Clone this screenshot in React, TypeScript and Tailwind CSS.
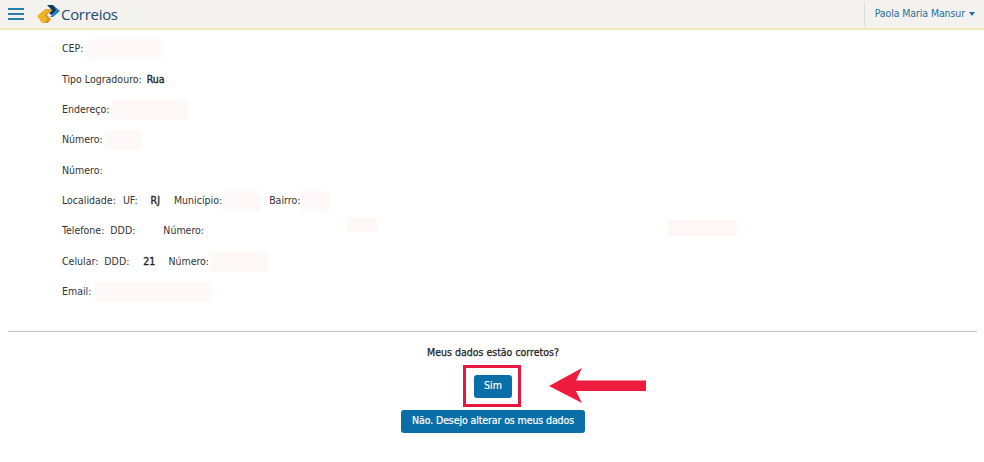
const rows = [
  { key: 'cep', items: [{ t: 'CEP:' }, { pink: 'ml-[3px] w-[75px]' }] },
  { key: 'tipo', items: [{ t: 'Tipo Logradouro:' }, { b: 'Rua', cls: 'ml-[5px]' }] },
  { key: 'end', items: [{ t: 'Endereço:' }, { pink: 'ml-[3px] w-[76px]' }] },
  { key: 'num', items: [{ t: 'Número:' }, { pink: 'ml-[2px] w-[36px]' }] },
  { key: 'num2', items: [{ t: 'Número:' }] },
  {
    key: 'loc',
    items: [
      { t: 'Localidade:' },
      { t: 'UF:', cls: 'ml-[7px]' },
      { b: 'RJ', cls: 'ml-[13px]' },
      { t: 'Município:', cls: 'ml-[14px]' },
      { pink: 'ml-[1px] w-[37px]' },
      { t: 'Bairro:', cls: 'ml-[9px]' },
      { pink: 'ml-[1px] w-[29px]' },
    ],
  },
  { key: 'tel', items: [{ t: 'Telefone:' }, { t: 'DDD:', cls: 'ml-[6px]' }, { t: 'Número:', cls: 'ml-[28px]' }] },
  {
    key: 'cel',
    items: [
      { t: 'Celular:' },
      { t: 'DDD:', cls: 'ml-[6px]' },
      { b: '21', cls: 'ml-[14px]' },
      { t: 'Número:', cls: 'ml-[13px]' },
      { pink: 'ml-[1px] w-[58px]' },
    ],
  },
  { key: 'email', items: [{ t: 'Email:' }, { pink: 'ml-[4px] w-[116px]' }] },
];

const Logo = () => (
  <svg width="24" height="20" viewBox="0 0 24 20">
    <path d="M0 12 L8 5 H13 L7 11.5 L10 15 L7 19 H5 Z" fill="#f0b323" />
    <path d="M7 11.5 L13 5 H15 L10 11 L14 15 L11 19 H7 L10 15 Z" fill="#d9971c" />
    <path d="M10 1 H16 L20 6 L15 11 L12 9.5 L15 6 Z" fill="#12395f" />
    <path d="M16 1 L23 7 L16 13 H13 L15 11 L20 6 Z" fill="#1c7fb8" />
  </svg>
);

export default function App() {
  return (
    <div className="relative h-[462px] w-[984px] overflow-hidden bg-white font-['DejaVu_Sans_Condensed','DejaVu_Sans',sans-serif] text-[10.5px] text-[#333]">
      <header className="flex h-[30px] items-center justify-between border-b-2 border-[#f5e9b8] bg-[#f3f2ee]">
        <div className="flex items-center">
          <div className="ml-2 flex w-[16px] flex-col gap-[3px]">
            <span className="h-[2px] bg-[#2a7dab]" />
            <span className="h-[2px] bg-[#2a7dab]" />
            <span className="h-[2px] bg-[#2a7dab]" />
          </div>
          <div className="ml-[13px] flex items-center">
            <Logo />
            <span className="font-['Open_Sans',sans-serif] text-[15px] font-medium tracking-[-0.3px] text-[#1c4a72]">Correios</span>
          </div>
        </div>
        <div className="flex h-[24px] items-center border-l border-[#dddcd6] pl-[10px] pr-[2px] text-[#2a6f9b]">
          <span className="tracking-[-0.1px]">Paola Maria Mansur</span>
          <span className="mx-[7px] ml-[4px] h-0 w-0 border-x-[3px] border-t-[4px] border-x-transparent border-t-[#1f6fa3]" />
        </div>
      </header>

      <main className="pl-[62px] pt-[4px]">
        {rows.map((r) => (
          <div key={r.key} className="flex h-[30.35px] items-center">
            {r.items.map((it, i) =>
              it.pink ? (
                <span key={i} className={`h-[20px] bg-[#fff8f8] ${it.pink}`} />
              ) : it.b ? (
                <span key={i} className={`text-[#222] [-webkit-text-stroke:0.35px_#222] ${it.cls ?? ''}`}>{it.b}</span>
              ) : (
                <span key={i} className={it.cls}>{it.t}</span>
              ),
            )}
          </div>
        ))}
      </main>

      <hr className="mx-2 mt-[24px] w-[969px] border-t border-[#c4c4c4]" />

      <section className="mt-[13px] flex flex-col items-center pl-[2px]">
        <p className="text-[#222] [-webkit-text-stroke:0.25px_#222]">Meus dados estão corretos?</p>
        <button className="mt-[14px] h-[23px] w-[38px] rounded-[3px] bg-[#0a6ea8] text-white [-webkit-text-stroke:0.2px_#fff]">Sim</button>
        <button className="mt-[12px] h-[23px] w-[184px] rounded-[3px] bg-[#0a6ea8] tracking-[-0.1px] text-white [-webkit-text-stroke:0.2px_#fff]">Não. Desejo alterar os meus dados</button>
      </section>

      {/* marcacoes por cima do print */}
      <span className="absolute left-[347px] top-[218px] h-[14px] w-[30px] bg-[#fff6f6]" />
      <span className="absolute left-[668px] top-[220px] h-[16px] w-[69px] bg-[#fff6f6]" />
      <div className="absolute left-[463px] top-[365px] h-[42px] w-[58px] border-[3px] border-[#e8173f]" />
      <svg className="absolute left-[549px] top-[367px]" width="98" height="37" viewBox="0 0 98 37">
        <path d="M0 19 L33 1 L27 13.5 H97 V24 H27 L33 36 Z" fill="#ee1c3e" />
      </svg>
    </div>
  );
}
